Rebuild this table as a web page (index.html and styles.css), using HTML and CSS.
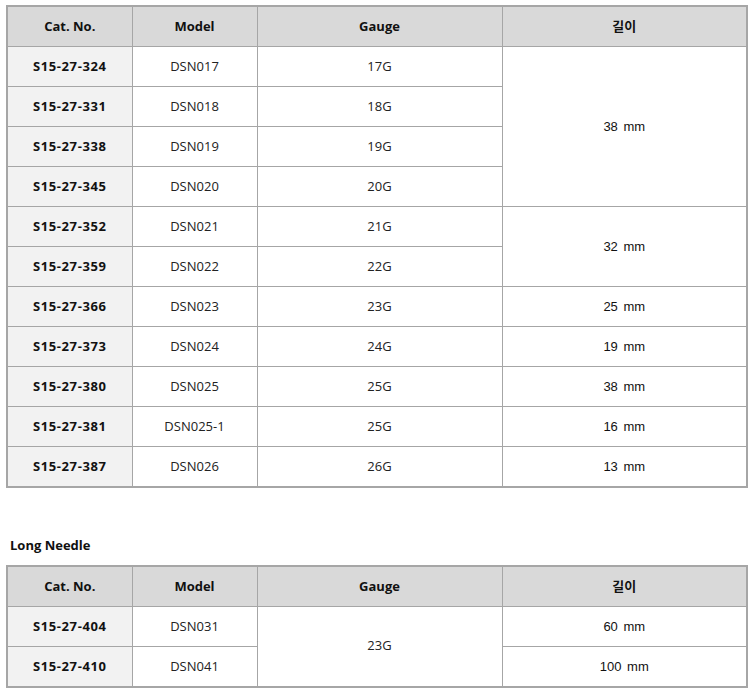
FILE: index.html
```html
<!DOCTYPE html>
<html lang="ko">
<head>
<meta charset="utf-8">
<link rel="stylesheet" href="styles.css">
</head>
<body>
<div class="page">
<table class="spec">
  <colgroup><col class="c1"><col class="c2"><col class="c3"><col class="c4"></colgroup>
  <thead>
    <tr><th>Cat. No.</th><th>Model</th><th>Gauge</th><th>길이</th></tr>
  </thead>
  <tbody>
    <tr><td class="cat">S15-27-324</td><td>DSN017</td><td>17G</td><td class="len" rowspan="4">38 mm</td></tr>
    <tr><td class="cat">S15-27-331</td><td>DSN018</td><td>18G</td></tr>
    <tr><td class="cat">S15-27-338</td><td>DSN019</td><td>19G</td></tr>
    <tr><td class="cat">S15-27-345</td><td>DSN020</td><td>20G</td></tr>
    <tr><td class="cat">S15-27-352</td><td>DSN021</td><td>21G</td><td class="len" rowspan="2">32 mm</td></tr>
    <tr><td class="cat">S15-27-359</td><td>DSN022</td><td>22G</td></tr>
    <tr><td class="cat">S15-27-366</td><td>DSN023</td><td>23G</td><td class="len">25 mm</td></tr>
    <tr><td class="cat">S15-27-373</td><td>DSN024</td><td>24G</td><td class="len">19 mm</td></tr>
    <tr><td class="cat">S15-27-380</td><td>DSN025</td><td>25G</td><td class="len">38 mm</td></tr>
    <tr><td class="cat">S15-27-381</td><td>DSN025-1</td><td>25G</td><td class="len">16 mm</td></tr>
    <tr><td class="cat">S15-27-387</td><td>DSN026</td><td>26G</td><td class="len">13 mm</td></tr>
  </tbody>
</table>

<p class="caption">Long Needle</p>

<table class="spec">
  <colgroup><col class="c1"><col class="c2"><col class="c3"><col class="c4"></colgroup>
  <thead>
    <tr><th>Cat. No.</th><th>Model</th><th>Gauge</th><th>길이</th></tr>
  </thead>
  <tbody>
    <tr><td class="cat">S15-27-404</td><td>DSN031</td><td class="span" rowspan="2">23G</td><td class="len">60 mm</td></tr>
    <tr><td class="cat">S15-27-410</td><td>DSN041</td><td class="len">100 mm</td></tr>
  </tbody>
</table>
</div>
</body>
</html>
```

FILE: styles.css
```css
html, body {
  margin: 0;
  padding: 0;
  background: #ffffff;
}

.page {
  padding: 5px 4px 0 6px;
  font-family: "Open Sans", "Noto Sans CJK KR", sans-serif;
  font-size: 13px;
  color: #222;
}

.spec {
  width: 742px;
  border-collapse: collapse;
  border: 2px solid #a6a6a6;
  table-layout: fixed;
}

.spec .c1, .spec .c2 { width: 125px; }
.spec .c3, .spec .c4 { width: 245px; }

.spec th,
.spec td {
  border: 1px solid #a6a6a6;
  height: 37px;
  padding: 0 0 2px;
  text-align: center;
  vertical-align: middle;
  line-height: 18px;
}

.spec th {
  background: #d9d9d9;
  font-weight: 700;
  color: #111;
}

.spec td {
  background: #ffffff;
  font-weight: 400;
}

.spec td.cat {
  background: #f2f2f2;
  font-weight: 700;
  letter-spacing: 0.6px;
  color: #111;
}

.spec td.len {
  font-family: "Liberation Sans", "Noto Sans CJK KR", sans-serif;
  word-spacing: 2px;
  padding-bottom: 0;
  height: 39px;
  color: #111;
}

.spec td.span {
  padding-bottom: 4px;
}

.caption {
  margin: 48px 0 9px 4px;
  height: 20px;
  line-height: 18px;
  font-weight: 700;
  color: #111;
}
```
